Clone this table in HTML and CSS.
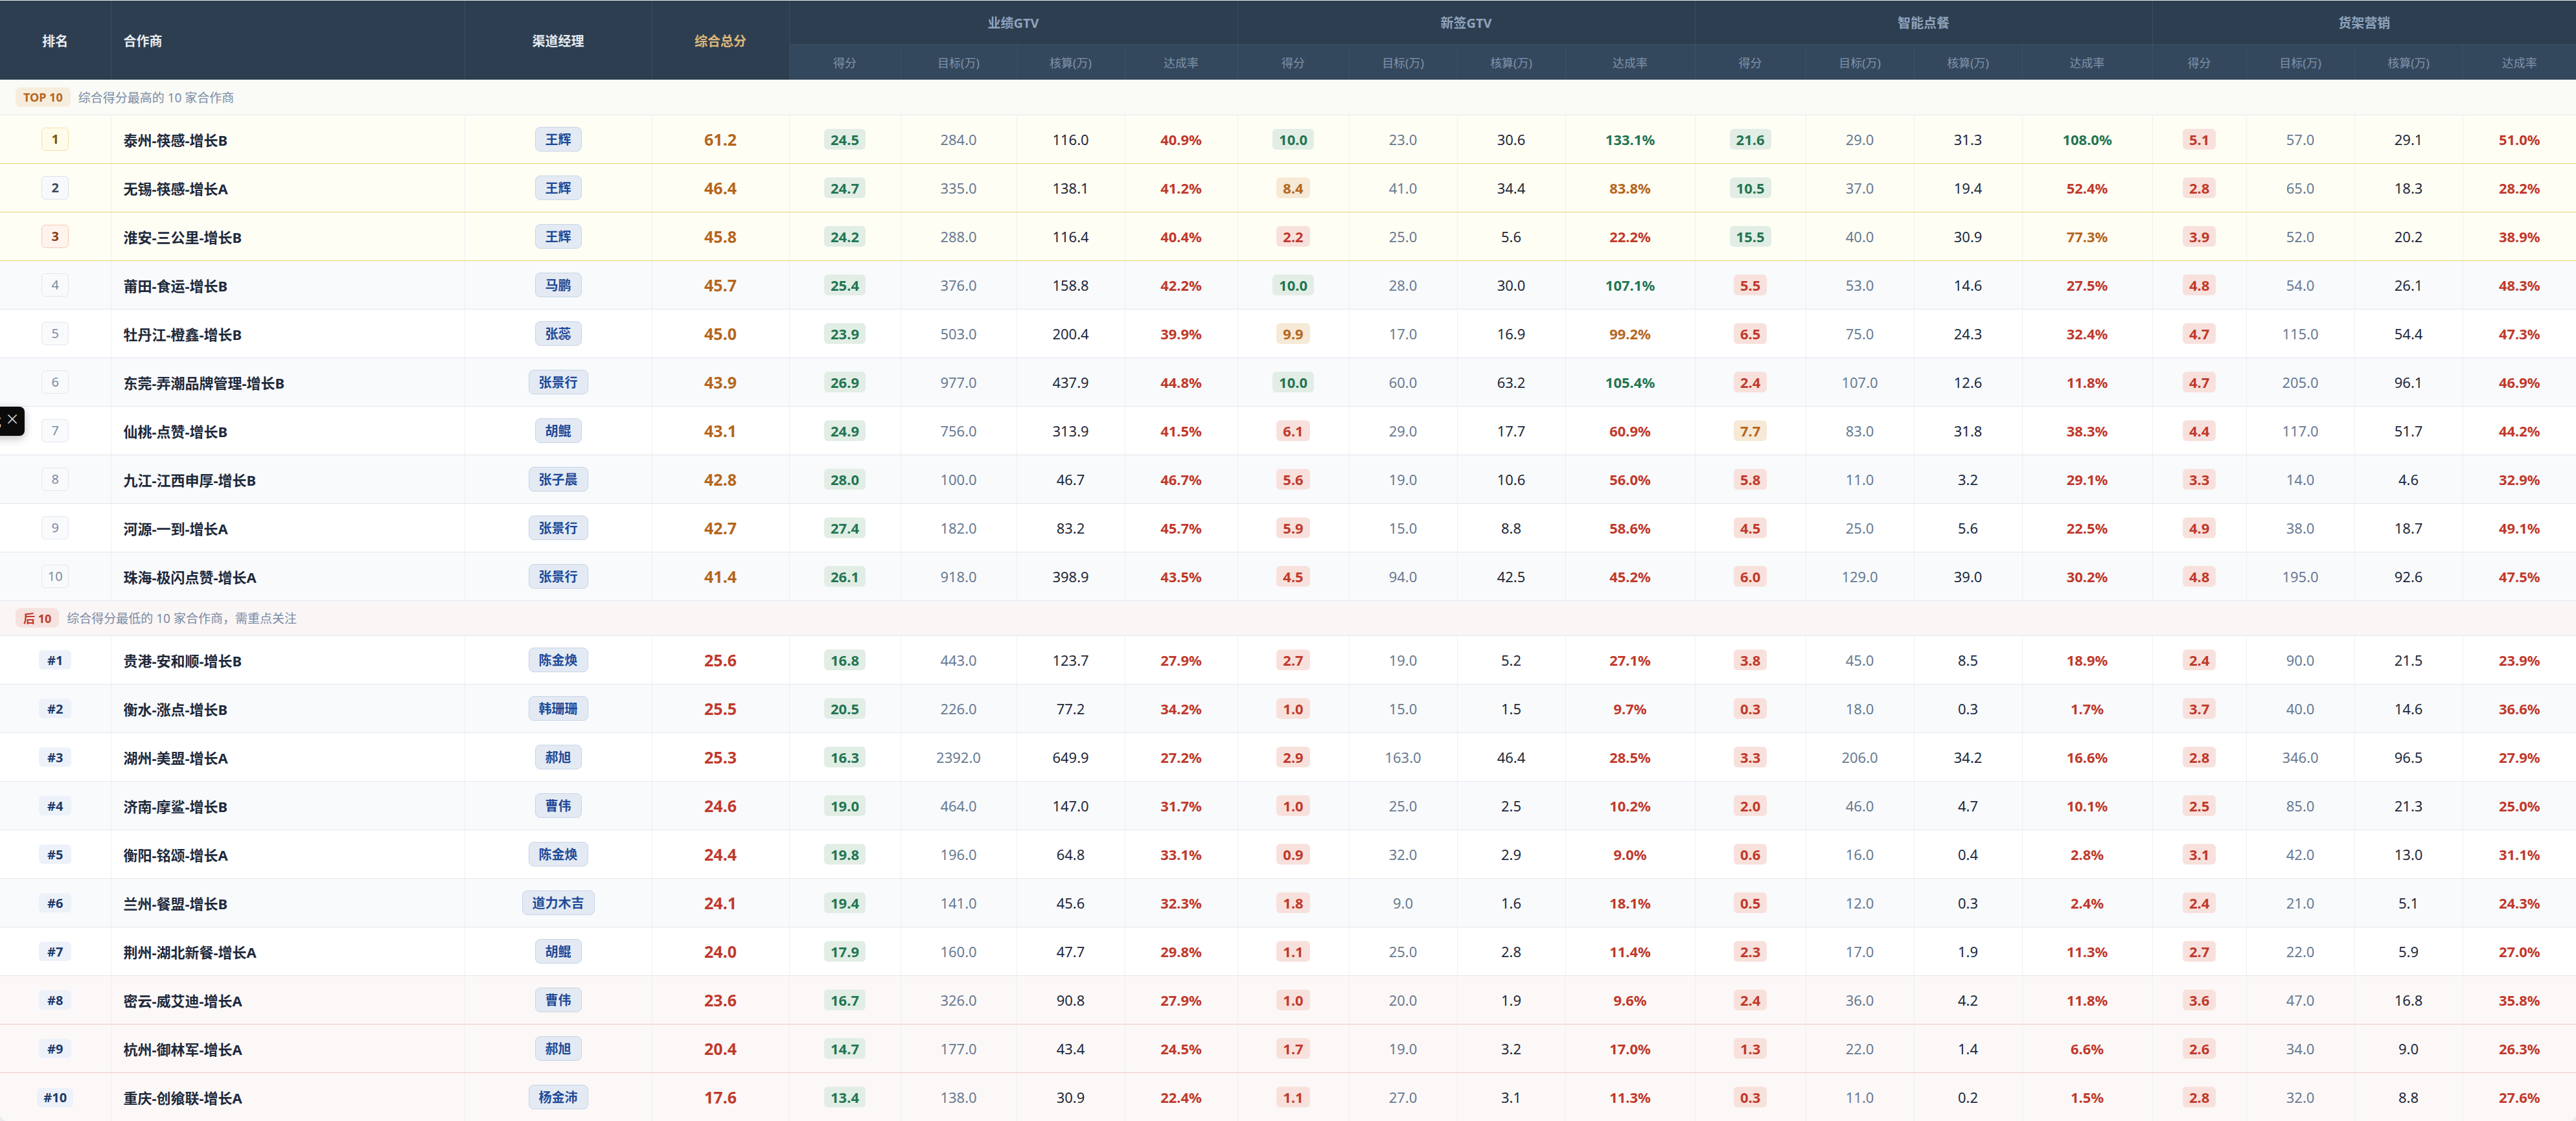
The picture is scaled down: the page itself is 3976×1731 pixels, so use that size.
FILE: index.html
```html
<!DOCTYPE html>
<html lang="zh-CN">
<head>
<meta charset="utf-8">
<title>合作商综合得分排名</title>
<link rel="stylesheet" href="styles.css">
</head>
<body>
<div class="wrap">
<table class="rank-table">
<colgroup>
<col style="width:171px"><col style="width:546px"><col style="width:289px"><col style="width:212px">
<col style="width:172px"><col style="width:179px"><col style="width:167px"><col style="width:174px">
<col style="width:172px"><col style="width:167px"><col style="width:167px"><col style="width:200px">
<col style="width:171px"><col style="width:167px"><col style="width:167px"><col style="width:201px">
<col style="width:145px"><col style="width:167px"><col style="width:167px"><col style="width:175px">
</colgroup>
<thead>
<tr class="h1">
<th class="main" rowspan="2">排名</th>
<th class="main left" rowspan="2">合作商</th>
<th class="main" rowspan="2">渠道经理</th>
<th class="main gold" rowspan="2">综合总分</th>
<th class="grp" colspan="4">业绩GTV</th>
<th class="grp" colspan="4">新签GTV</th>
<th class="grp" colspan="4">智能点餐</th>
<th class="grp" colspan="4">货架营销</th>
</tr>
<tr class="h2">
<th class="sub">得分</th><th class="sub">目标(万)</th><th class="sub">核算(万)</th><th class="sub">达成率</th>
<th class="sub">得分</th><th class="sub">目标(万)</th><th class="sub">核算(万)</th><th class="sub">达成率</th>
<th class="sub">得分</th><th class="sub">目标(万)</th><th class="sub">核算(万)</th><th class="sub">达成率</th>
<th class="sub">得分</th><th class="sub">目标(万)</th><th class="sub">核算(万)</th><th class="sub">达成率</th>
</tr>
</thead>
<tbody>
<tr class="sec sec-top"><td colspan="20"><div class="sec-inner"><span class="tag tag-top">TOP 10</span><span class="desc">综合得分最高的 10 家合作商</span></div></td></tr>

<tr class="d top">
<td class="rk"><span class="rb r1">1</span></td><td class="pn">泰州-筷感-增长B</td><td class="mg"><span class="mb">王辉</span></td><td class="tot o">61.2</td>
<td class="sc"><span class="b g">24.5</span></td><td class="tg">284.0</td><td class="ac">116.0</td><td class="rt r">40.9%</td>
<td class="sc"><span class="b g">10.0</span></td><td class="tg">23.0</td><td class="ac">30.6</td><td class="rt g">133.1%</td>
<td class="sc"><span class="b g">21.6</span></td><td class="tg">29.0</td><td class="ac">31.3</td><td class="rt g">108.0%</td>
<td class="sc"><span class="b r">5.1</span></td><td class="tg">57.0</td><td class="ac">29.1</td><td class="rt r">51.0%</td>
</tr>
<tr class="d top">
<td class="rk"><span class="rb r2">2</span></td><td class="pn">无锡-筷感-增长A</td><td class="mg"><span class="mb">王辉</span></td><td class="tot o">46.4</td>
<td class="sc"><span class="b g">24.7</span></td><td class="tg">335.0</td><td class="ac">138.1</td><td class="rt r">41.2%</td>
<td class="sc"><span class="b o">8.4</span></td><td class="tg">41.0</td><td class="ac">34.4</td><td class="rt o">83.8%</td>
<td class="sc"><span class="b g">10.5</span></td><td class="tg">37.0</td><td class="ac">19.4</td><td class="rt r">52.4%</td>
<td class="sc"><span class="b r">2.8</span></td><td class="tg">65.0</td><td class="ac">18.3</td><td class="rt r">28.2%</td>
</tr>
<tr class="d top">
<td class="rk"><span class="rb r3">3</span></td><td class="pn">淮安-三公里-增长B</td><td class="mg"><span class="mb">王辉</span></td><td class="tot o">45.8</td>
<td class="sc"><span class="b g">24.2</span></td><td class="tg">288.0</td><td class="ac">116.4</td><td class="rt r">40.4%</td>
<td class="sc"><span class="b r">2.2</span></td><td class="tg">25.0</td><td class="ac">5.6</td><td class="rt r">22.2%</td>
<td class="sc"><span class="b g">15.5</span></td><td class="tg">40.0</td><td class="ac">30.9</td><td class="rt o">77.3%</td>
<td class="sc"><span class="b r">3.9</span></td><td class="tg">52.0</td><td class="ac">20.2</td><td class="rt r">38.9%</td>
</tr>
<tr class="d alt">
<td class="rk"><span class="rb rn">4</span></td><td class="pn">莆田-食运-增长B</td><td class="mg"><span class="mb">马鹏</span></td><td class="tot o">45.7</td>
<td class="sc"><span class="b g">25.4</span></td><td class="tg">376.0</td><td class="ac">158.8</td><td class="rt r">42.2%</td>
<td class="sc"><span class="b g">10.0</span></td><td class="tg">28.0</td><td class="ac">30.0</td><td class="rt g">107.1%</td>
<td class="sc"><span class="b r">5.5</span></td><td class="tg">53.0</td><td class="ac">14.6</td><td class="rt r">27.5%</td>
<td class="sc"><span class="b r">4.8</span></td><td class="tg">54.0</td><td class="ac">26.1</td><td class="rt r">48.3%</td>
</tr>
<tr class="d">
<td class="rk"><span class="rb rn">5</span></td><td class="pn">牡丹江-橙鑫-增长B</td><td class="mg"><span class="mb">张蕊</span></td><td class="tot o">45.0</td>
<td class="sc"><span class="b g">23.9</span></td><td class="tg">503.0</td><td class="ac">200.4</td><td class="rt r">39.9%</td>
<td class="sc"><span class="b o">9.9</span></td><td class="tg">17.0</td><td class="ac">16.9</td><td class="rt o">99.2%</td>
<td class="sc"><span class="b r">6.5</span></td><td class="tg">75.0</td><td class="ac">24.3</td><td class="rt r">32.4%</td>
<td class="sc"><span class="b r">4.7</span></td><td class="tg">115.0</td><td class="ac">54.4</td><td class="rt r">47.3%</td>
</tr>
<tr class="d alt">
<td class="rk"><span class="rb rn">6</span></td><td class="pn">东莞-弄潮品牌管理-增长B</td><td class="mg"><span class="mb">张景行</span></td><td class="tot o">43.9</td>
<td class="sc"><span class="b g">26.9</span></td><td class="tg">977.0</td><td class="ac">437.9</td><td class="rt r">44.8%</td>
<td class="sc"><span class="b g">10.0</span></td><td class="tg">60.0</td><td class="ac">63.2</td><td class="rt g">105.4%</td>
<td class="sc"><span class="b r">2.4</span></td><td class="tg">107.0</td><td class="ac">12.6</td><td class="rt r">11.8%</td>
<td class="sc"><span class="b r">4.7</span></td><td class="tg">205.0</td><td class="ac">96.1</td><td class="rt r">46.9%</td>
</tr>
<tr class="d">
<td class="rk"><span class="rb rn">7</span></td><td class="pn">仙桃-点赞-增长B</td><td class="mg"><span class="mb">胡鲲</span></td><td class="tot o">43.1</td>
<td class="sc"><span class="b g">24.9</span></td><td class="tg">756.0</td><td class="ac">313.9</td><td class="rt r">41.5%</td>
<td class="sc"><span class="b r">6.1</span></td><td class="tg">29.0</td><td class="ac">17.7</td><td class="rt r">60.9%</td>
<td class="sc"><span class="b o">7.7</span></td><td class="tg">83.0</td><td class="ac">31.8</td><td class="rt r">38.3%</td>
<td class="sc"><span class="b r">4.4</span></td><td class="tg">117.0</td><td class="ac">51.7</td><td class="rt r">44.2%</td>
</tr>
<tr class="d alt">
<td class="rk"><span class="rb rn">8</span></td><td class="pn">九江-江西申厚-增长B</td><td class="mg"><span class="mb">张子晨</span></td><td class="tot o">42.8</td>
<td class="sc"><span class="b g">28.0</span></td><td class="tg">100.0</td><td class="ac">46.7</td><td class="rt r">46.7%</td>
<td class="sc"><span class="b r">5.6</span></td><td class="tg">19.0</td><td class="ac">10.6</td><td class="rt r">56.0%</td>
<td class="sc"><span class="b r">5.8</span></td><td class="tg">11.0</td><td class="ac">3.2</td><td class="rt r">29.1%</td>
<td class="sc"><span class="b r">3.3</span></td><td class="tg">14.0</td><td class="ac">4.6</td><td class="rt r">32.9%</td>
</tr>
<tr class="d">
<td class="rk"><span class="rb rn">9</span></td><td class="pn">河源-一到-增长A</td><td class="mg"><span class="mb">张景行</span></td><td class="tot o">42.7</td>
<td class="sc"><span class="b g">27.4</span></td><td class="tg">182.0</td><td class="ac">83.2</td><td class="rt r">45.7%</td>
<td class="sc"><span class="b r">5.9</span></td><td class="tg">15.0</td><td class="ac">8.8</td><td class="rt r">58.6%</td>
<td class="sc"><span class="b r">4.5</span></td><td class="tg">25.0</td><td class="ac">5.6</td><td class="rt r">22.5%</td>
<td class="sc"><span class="b r">4.9</span></td><td class="tg">38.0</td><td class="ac">18.7</td><td class="rt r">49.1%</td>
</tr>
<tr class="d alt">
<td class="rk"><span class="rb rn">10</span></td><td class="pn">珠海-极闪点赞-增长A</td><td class="mg"><span class="mb">张景行</span></td><td class="tot o">41.4</td>
<td class="sc"><span class="b g">26.1</span></td><td class="tg">918.0</td><td class="ac">398.9</td><td class="rt r">43.5%</td>
<td class="sc"><span class="b r">4.5</span></td><td class="tg">94.0</td><td class="ac">42.5</td><td class="rt r">45.2%</td>
<td class="sc"><span class="b r">6.0</span></td><td class="tg">129.0</td><td class="ac">39.0</td><td class="rt r">30.2%</td>
<td class="sc"><span class="b r">4.8</span></td><td class="tg">195.0</td><td class="ac">92.6</td><td class="rt r">47.5%</td>
</tr>
</tbody>
<tbody>
<tr class="sec sec-bot"><td colspan="20"><div class="sec-inner"><span class="tag tag-bot">后 10</span><span class="desc">综合得分最低的 10 家合作商，需重点关注</span></div></td></tr>

<tr class="d">
<td class="rk"><span class="rb rh">#1</span></td><td class="pn">贵港-安和顺-增长B</td><td class="mg"><span class="mb">陈金焕</span></td><td class="tot r">25.6</td>
<td class="sc"><span class="b g">16.8</span></td><td class="tg">443.0</td><td class="ac">123.7</td><td class="rt r">27.9%</td>
<td class="sc"><span class="b r">2.7</span></td><td class="tg">19.0</td><td class="ac">5.2</td><td class="rt r">27.1%</td>
<td class="sc"><span class="b r">3.8</span></td><td class="tg">45.0</td><td class="ac">8.5</td><td class="rt r">18.9%</td>
<td class="sc"><span class="b r">2.4</span></td><td class="tg">90.0</td><td class="ac">21.5</td><td class="rt r">23.9%</td>
</tr>
<tr class="d alt">
<td class="rk"><span class="rb rh">#2</span></td><td class="pn">衡水-涨点-增长B</td><td class="mg"><span class="mb">韩珊珊</span></td><td class="tot r">25.5</td>
<td class="sc"><span class="b g">20.5</span></td><td class="tg">226.0</td><td class="ac">77.2</td><td class="rt r">34.2%</td>
<td class="sc"><span class="b r">1.0</span></td><td class="tg">15.0</td><td class="ac">1.5</td><td class="rt r">9.7%</td>
<td class="sc"><span class="b r">0.3</span></td><td class="tg">18.0</td><td class="ac">0.3</td><td class="rt r">1.7%</td>
<td class="sc"><span class="b r">3.7</span></td><td class="tg">40.0</td><td class="ac">14.6</td><td class="rt r">36.6%</td>
</tr>
<tr class="d">
<td class="rk"><span class="rb rh">#3</span></td><td class="pn">湖州-美盟-增长A</td><td class="mg"><span class="mb">郝旭</span></td><td class="tot r">25.3</td>
<td class="sc"><span class="b g">16.3</span></td><td class="tg">2392.0</td><td class="ac">649.9</td><td class="rt r">27.2%</td>
<td class="sc"><span class="b r">2.9</span></td><td class="tg">163.0</td><td class="ac">46.4</td><td class="rt r">28.5%</td>
<td class="sc"><span class="b r">3.3</span></td><td class="tg">206.0</td><td class="ac">34.2</td><td class="rt r">16.6%</td>
<td class="sc"><span class="b r">2.8</span></td><td class="tg">346.0</td><td class="ac">96.5</td><td class="rt r">27.9%</td>
</tr>
<tr class="d alt">
<td class="rk"><span class="rb rh">#4</span></td><td class="pn">济南-摩鲨-增长B</td><td class="mg"><span class="mb">曹伟</span></td><td class="tot r">24.6</td>
<td class="sc"><span class="b g">19.0</span></td><td class="tg">464.0</td><td class="ac">147.0</td><td class="rt r">31.7%</td>
<td class="sc"><span class="b r">1.0</span></td><td class="tg">25.0</td><td class="ac">2.5</td><td class="rt r">10.2%</td>
<td class="sc"><span class="b r">2.0</span></td><td class="tg">46.0</td><td class="ac">4.7</td><td class="rt r">10.1%</td>
<td class="sc"><span class="b r">2.5</span></td><td class="tg">85.0</td><td class="ac">21.3</td><td class="rt r">25.0%</td>
</tr>
<tr class="d">
<td class="rk"><span class="rb rh">#5</span></td><td class="pn">衡阳-铭颂-增长A</td><td class="mg"><span class="mb">陈金焕</span></td><td class="tot r">24.4</td>
<td class="sc"><span class="b g">19.8</span></td><td class="tg">196.0</td><td class="ac">64.8</td><td class="rt r">33.1%</td>
<td class="sc"><span class="b r">0.9</span></td><td class="tg">32.0</td><td class="ac">2.9</td><td class="rt r">9.0%</td>
<td class="sc"><span class="b r">0.6</span></td><td class="tg">16.0</td><td class="ac">0.4</td><td class="rt r">2.8%</td>
<td class="sc"><span class="b r">3.1</span></td><td class="tg">42.0</td><td class="ac">13.0</td><td class="rt r">31.1%</td>
</tr>
<tr class="d alt">
<td class="rk"><span class="rb rh">#6</span></td><td class="pn">兰州-餐盟-增长B</td><td class="mg"><span class="mb">道力木吉</span></td><td class="tot r">24.1</td>
<td class="sc"><span class="b g">19.4</span></td><td class="tg">141.0</td><td class="ac">45.6</td><td class="rt r">32.3%</td>
<td class="sc"><span class="b r">1.8</span></td><td class="tg">9.0</td><td class="ac">1.6</td><td class="rt r">18.1%</td>
<td class="sc"><span class="b r">0.5</span></td><td class="tg">12.0</td><td class="ac">0.3</td><td class="rt r">2.4%</td>
<td class="sc"><span class="b r">2.4</span></td><td class="tg">21.0</td><td class="ac">5.1</td><td class="rt r">24.3%</td>
</tr>
<tr class="d">
<td class="rk"><span class="rb rh">#7</span></td><td class="pn">荆州-湖北新餐-增长A</td><td class="mg"><span class="mb">胡鲲</span></td><td class="tot r">24.0</td>
<td class="sc"><span class="b g">17.9</span></td><td class="tg">160.0</td><td class="ac">47.7</td><td class="rt r">29.8%</td>
<td class="sc"><span class="b r">1.1</span></td><td class="tg">25.0</td><td class="ac">2.8</td><td class="rt r">11.4%</td>
<td class="sc"><span class="b r">2.3</span></td><td class="tg">17.0</td><td class="ac">1.9</td><td class="rt r">11.3%</td>
<td class="sc"><span class="b r">2.7</span></td><td class="tg">22.0</td><td class="ac">5.9</td><td class="rt r">27.0%</td>
</tr>
<tr class="d warn">
<td class="rk"><span class="rb rh">#8</span></td><td class="pn">密云-威艾迪-增长A</td><td class="mg"><span class="mb">曹伟</span></td><td class="tot r">23.6</td>
<td class="sc"><span class="b g">16.7</span></td><td class="tg">326.0</td><td class="ac">90.8</td><td class="rt r">27.9%</td>
<td class="sc"><span class="b r">1.0</span></td><td class="tg">20.0</td><td class="ac">1.9</td><td class="rt r">9.6%</td>
<td class="sc"><span class="b r">2.4</span></td><td class="tg">36.0</td><td class="ac">4.2</td><td class="rt r">11.8%</td>
<td class="sc"><span class="b r">3.6</span></td><td class="tg">47.0</td><td class="ac">16.8</td><td class="rt r">35.8%</td>
</tr>
<tr class="d warn">
<td class="rk"><span class="rb rh">#9</span></td><td class="pn">杭州-御林军-增长A</td><td class="mg"><span class="mb">郝旭</span></td><td class="tot r">20.4</td>
<td class="sc"><span class="b g">14.7</span></td><td class="tg">177.0</td><td class="ac">43.4</td><td class="rt r">24.5%</td>
<td class="sc"><span class="b r">1.7</span></td><td class="tg">19.0</td><td class="ac">3.2</td><td class="rt r">17.0%</td>
<td class="sc"><span class="b r">1.3</span></td><td class="tg">22.0</td><td class="ac">1.4</td><td class="rt r">6.6%</td>
<td class="sc"><span class="b r">2.6</span></td><td class="tg">34.0</td><td class="ac">9.0</td><td class="rt r">26.3%</td>
</tr>
<tr class="d warn last">
<td class="rk"><span class="rb rh">#10</span></td><td class="pn">重庆-创飨联-增长A</td><td class="mg"><span class="mb">杨金沛</span></td><td class="tot r">17.6</td>
<td class="sc"><span class="b g">13.4</span></td><td class="tg">138.0</td><td class="ac">30.9</td><td class="rt r">22.4%</td>
<td class="sc"><span class="b r">1.1</span></td><td class="tg">27.0</td><td class="ac">3.1</td><td class="rt r">11.3%</td>
<td class="sc"><span class="b r">0.3</span></td><td class="tg">11.0</td><td class="ac">0.2</td><td class="rt r">1.5%</td>
<td class="sc"><span class="b r">2.8</span></td><td class="tg">32.0</td><td class="ac">8.8</td><td class="rt r">27.6%</td>
</tr>
</tbody>
</table>
</div>
<div class="toast"><span class="toast-text">数据加载完成</span><span class="toast-close">×</span></div>
</body>
</html>
```
FILE: styles.css
```css
* { box-sizing: border-box; }
html, body { margin: 0; padding: 0; }
body {
  background: #e8ebef;
  font-family: "Noto Sans", "Noto Sans CJK SC", sans-serif;
  color: #1e293b;
  overflow: hidden;
}
.wrap {
  margin-top: 1px;
  background: #ffffff;
  border-radius: 0 0 12px 12px;
  overflow: hidden;
  width: 3976px;
}
.rank-table {
  width: 3976px;
  border-collapse: collapse;
  table-layout: fixed;
}
.rank-table th, .rank-table td {
  padding: 0;
  text-align: center;
  vertical-align: middle;
  white-space: nowrap;
}
/* header */
.h1 { height: 67px; }
.h2 { height: 55px; }
.main {
  background: #2d3e50;
  color: #e6ebf1;
  font-size: 20px;
  font-weight: 700;
  border-right: 1px solid #3a4c60;
}
.main.left { text-align: left; padding-left: 19px; }
.main.gold { color: #dfb77b; }
.grp {
  background: #2d3e50;
  color: #8ea3bd;
  font-size: 20px;
  font-weight: 700;
  border-right: 1px solid #3a4c60;
  border-bottom: 1px solid #3a4c60;
}
.sub {
  background: #34485d;
  color: #7f93ab;
  font-size: 18px;
  font-weight: 400;
  border-right: 1px solid #3d5166;
}
.rank-table th:last-child { border-right: none; }
/* section rows */
.sec { height: 54px; }
.sec td { border-bottom: 1px solid #e1e6ee; text-align: left; }
.sec-top td { background: #fafaf6; }
.sec-bot td { background: #faf6f6; }
.sec-inner {
  display: flex;
  align-items: center;
  gap: 12px;
  padding-left: 24px;
}
.tag {
  display: inline-flex;
  align-items: center;
  height: 30px;
  padding: 0 12px;
  border-radius: 8px;
  font-size: 18px;
  font-weight: 700;
}
.tag-top { background: #f6eddd; color: #b5661f; }
.tag-bot { background: #f6e2df; color: #c0392b; }
.desc { font-size: 19px; color: #7a8ba3; }
/* data rows */
.d { height: 75px; background: #ffffff; }
.d.alt { background: #f8fafc; }
.d.top { background: #fffef5; }
.d.warn { background: #fcf8f7; }
.d td {
  border-bottom: 1px solid #e3e7ed;
  border-right: 1px solid #edf0f3;
  font-size: 22px;
}
.d td:last-child { border-right: none; }
.d.top td { border-bottom: 1px solid #ecd468; }
.d.warn td { border-bottom: 1px solid #ecc6c4; }
.d.last td { border-bottom: none; }
.rk { }
.rb {
  display: inline-flex;
  align-items: center;
  justify-content: center;
  min-width: 42px;
  height: 36px;
  border-radius: 6px;
  border: 1px solid #e2e8f0;
  font-size: 20px;
  background: #f8fafc;
  color: #7a8ba3;
}
.rb.r1 { background: #fffbea; border-color: #f2e2a4; color: #7a5600; font-weight: 700; }
.rb.r2 { background: #f7f9fc; border-color: #dbe2ea; color: #3b4b60; font-weight: 700; }
.rb.r3 { background: #fff3ed; border-color: #f4cbb6; color: #8c3a12; font-weight: 700; }
.rb.rh {
  border: none;
  height: 30px;
  min-width: 50px;
  padding: 0 10px;
  background: #edf2fa;
  color: #1e3a6a;
  font-weight: 700;
}
.pn {
  text-align: left !important;
  padding-left: 19px !important;
  font-weight: 700;
  color: #1e293b;
}
.mb {
  display: inline-flex;
  align-items: center;
  height: 38px;
  padding: 0 15px;
  border-radius: 8px;
  border: 1px solid #c8d4e6;
  background: #e4eaf3;
  color: #1f4a98;
  font-size: 20px;
  font-weight: 700;
}
.tot { font-size: 25px !important; font-weight: 700; }
.tot.o { color: #b5651d; }
.tot.r { color: #c0392b; }
.b {
  display: inline-flex;
  align-items: center;
  height: 32px;
  padding: 0 10px;
  border-radius: 6px;
  font-size: 22px;
  font-weight: 700;
}
.b.g { background: #e2eee5; color: #237552; }
.b.o { background: #f6e9d6; color: #b5651d; }
.b.r { background: #f8e1dc; color: #c0392b; }
.tg { color: #687a92; }
.ac { color: #1e293b; }
.rt { font-weight: 700; }
.rt.g { color: #237552; }
.rt.o { color: #b5651d; }
.rt.r { color: #c0392b; }
/* toast */
.toast {
  position: absolute;
  left: -200px;
  top: 628px;
  width: 238px;
  height: 45px;
  background: #0b0b0b;
  border-radius: 8px;
  box-shadow: 0 4px 14px rgba(0,0,0,0.25);
  display: flex;
  align-items: center;
  justify-content: flex-end;
  padding-right: 8px;
  color: #ffffff;
  font-family: "Noto Sans CJK SC", sans-serif;
}
.toast-text { font-size: 20px; margin-right: 6px; color: #e8e8e8; }
.toast-close { font-size: 22px; line-height: 1; align-self: flex-start; margin-top: 6px; color: #d8d8d8; }
```
